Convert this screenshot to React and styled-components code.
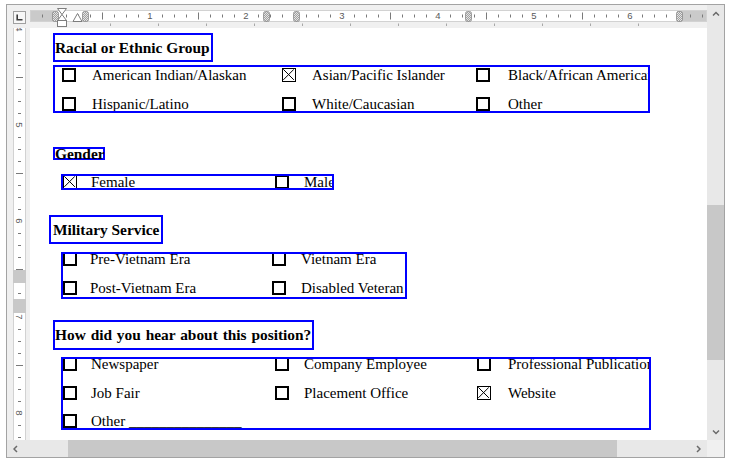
import React from 'react';
import styled, { createGlobalStyle } from 'styled-components';

const GlobalStyle = createGlobalStyle`
  html, body { margin: 0; padding: 0; background: #fff; }
  body { font-family: "Liberation Serif", "Times New Roman", serif; }
`;

const Frame = styled.div`
  box-sizing: border-box;
  margin: 4px 0 0 6px;
  width: 719px;
  height: 454px;
  border: 1px solid #a3a3a3;
  background: #f0f0f0;
  display: grid;
  grid-template-columns: 23px 677px 17px;
  grid-template-rows: 23px 412px 17px;
  grid-template-areas:
    "tab ruler vs"
    "vr doc vs"
    "hs hs corner";
  overflow: hidden;
`;

const TabCell = styled.div`
  grid-area: tab;
  padding: 6px 0 0 6px;
`;

const TabButton = styled.div`
  box-sizing: border-box;
  width: 13px;
  height: 13px;
  border: 1px solid #a0a0a0;
  background: #f7f7f7;
  display: flex;
  align-items: center;
  justify-content: center;
`;

const RulerCell = styled.div`
  grid-area: ruler;
  svg { display: block; }
`;

const VRulerCell = styled.div`
  grid-area: vr;
  padding-left: 6px;
  svg { display: block; }
`;

const Doc = styled.div`
  grid-area: doc;
  background: #fff;
  overflow: hidden;
  display: flex;
  flex-direction: column;
  align-items: flex-start;
  font-family: "Liberation Serif", "Times New Roman", serif;
  color: #000;
`;

const Heading = styled.div`
  box-sizing: content-box;
  margin: ${(p) => p.$mt}px 0 0 ${(p) => p.$ml}px;
  border: 2px solid #0000ff;
  padding: 0 ${(p) => p.$pr}px 0 ${(p) => p.$pl}px;
  height: ${(p) => p.$h}px;
  line-height: ${(p) => p.$h}px;
  width: ${(p) => (p.$w ? `${p.$w}px` : 'auto')};
  font-size: 15.4px;
  font-weight: bold;
  word-spacing: ${(p) => p.$ws || 0}px;
  white-space: nowrap;
`;

const Group = styled.div`
  box-sizing: border-box;
  margin: ${(p) => p.$mt}px 0 0 ${(p) => p.$ml}px;
  width: ${(p) => p.$w}px;
  border: 2px solid #0000ff;
  padding: 0 0 ${(p) => p.$pb}px ${(p) => p.$pl}px;
  overflow: hidden;
`;

const OptionGrid = styled.div`
  display: grid;
  grid-template-columns: ${(p) => p.$cols};
  grid-auto-rows: ${(p) => p.$rh}px;
  row-gap: ${(p) => p.$gap}px;
  align-items: center;
  justify-items: start;
  margin-top: ${(p) => p.$off}px;
`;

const CheckBox = styled.span`
  display: block;
  box-sizing: border-box;
  width: 14px;
  height: 14px;
  background: #fff;
  border: ${(p) => (p.$checked ? '1.4px' : '2px')} solid #000;
  svg { display: block; }
`;

const Label = styled.span`
  display: block;
  min-width: 0;
  font-size: 15px;
  line-height: 14px;
  white-space: nowrap;
`;

const VScroll = styled.div`
  grid-area: vs;
  background: #e8e8e8;
  display: flex;
  flex-direction: column;
`;

const HScroll = styled.div`
  grid-area: hs;
  background: #e8e8e8;
  display: flex;
`;

const Corner = styled.div`
  grid-area: corner;
  background: #f0f0f0;
`;

const ArrowButton = styled.div`
  flex: none;
  width: 17px;
  height: 17px;
  display: flex;
  align-items: center;
  justify-content: center;
  svg { display: block; }
`;

const Track = styled.div`
  flex: 1;
  display: flex;
  flex-direction: ${(p) => (p.$vertical ? 'column' : 'row')};
`;

const Thumb = styled.div`
  flex: none;
  background: #c8c8c8;
  margin-top: ${(p) => p.$mt || 0}px;
  margin-left: ${(p) => p.$ml || 0}px;
  width: ${(p) => p.$w}px;
  height: ${(p) => p.$h}px;
`;

/* ---------- drawings ---------- */

const Chevron = ({ dir }) => {
  const pts = {
    up: '1,4.5 4,1.5 7,4.5',
    down: '1,1.5 4,4.5 7,1.5',
    left: '4,1 1,4 4,7',
    right: '1,1 4,4 1,7',
  }[dir];
  const vertical = dir === 'up' || dir === 'down';
  return (
    <svg width={vertical ? 8 : 5} height={vertical ? 6 : 8}>
      <polyline points={pts} fill="none" stroke="#6a6a6a" strokeWidth="1.5" />
    </svg>
  );
};

const CheckedMark = () => (
  <svg width="11.2" height="11.2" viewBox="0 0 11.2 11.2">
    <line x1="0.3" y1="0.3" x2="10.9" y2="10.9" stroke="#000" strokeWidth="1" />
    <line x1="10.9" y1="0.3" x2="0.3" y2="10.9" stroke="#000" strokeWidth="1" />
  </svg>
);

const HRuler = () => {
  const items = [];
  for (let k = -2; k <= 54; k++) {
    const x = 24 + 12 * k;
    if (x <= 0 || x >= 677) continue;
    const m = ((k % 8) + 8) % 8;
    if (k > 0 && m === 0) {
      items.push(
        <text key={k} x={x} y={14.3} fontSize="9.5" textAnchor="middle" fill="#5a5a5a"
          fontFamily='"Liberation Sans", Arial, sans-serif'>{k / 8}</text>
      );
    } else if (m === 4) {
      items.push(<rect key={k} x={x} y={7.5} width={1} height={7} fill="#7a7a7a" />);
    } else if (k !== 0) {
      items.push(<rect key={k} x={x} y={9.5} width={1} height={3} fill="#7a7a7a" />);
    }
  }
  const tabs = [];
  for (let x = 110; x <= 640; x += 48) {
    tabs.push(<rect key={x} x={x - 30} y={18.5} width={1} height={2.5} fill="#a8a8a8" />);
  }
  const markers = [52, 82, 263, 293, 465, 676].map((px) => (
    <rect key={px} x={px - 30 + 0.5} y={6.5} width={6} height={10} rx={2}
      fill="url(#chk)" stroke="#8c8c8c" strokeWidth="0.8" />
  ));
  return (
    <svg width="677" height="23" viewBox="0 0 677 23">
      <defs>
        <pattern id="chk" width="2" height="2" patternUnits="userSpaceOnUse">
          <rect width="2" height="2" fill="#e4e4e4" />
          <rect width="1" height="1" fill="#a0a0a0" />
          <rect x="1" y="1" width="1" height="1" fill="#a0a0a0" />
        </pattern>
      </defs>
      <rect x="0" y="5" width="24" height="12" fill="#cacaca" />
      <rect x="24" y="5" width="623" height="12" fill="#ffffff" />
      <rect x="647" y="5" width="30" height="12" fill="#cacaca" />
      <rect x="0.5" y="5.5" width="676" height="11" fill="none" stroke="#d2d2d2" />
      {items}
      {tabs}
      {markers}
      <polygon points="27.5,3.5 36.5,3.5 32,9.5" fill="#fff" stroke="#7d7d7d" />
      <polygon points="32,9.5 36.5,15.5 27.5,15.5" fill="#fff" stroke="#7d7d7d" />
      <rect x="27.5" y="15.5" width="9" height="6" fill="#fff" stroke="#7d7d7d" />
      <polygon points="47.5,8.5 52,16.5 43,16.5" fill="#fff" stroke="#7d7d7d" />
    </svg>
  );
};

const VRuler = () => {
  const items = [];
  for (let k = 0; k <= 34; k++) {
    const y = 1 + 12 * k;
    const m = k % 8;
    if (m === 0) {
      items.push(
        <text key={k} x={6.5} y={y} fontSize="9.5" textAnchor="middle" dominantBaseline="central"
          fill="#5a5a5a" fontFamily='"Liberation Sans", Arial, sans-serif'
          transform={`rotate(90 6.5 ${y})`}>{4 + k / 8}</text>
      );
    } else if (m === 4) {
      items.push(<rect key={k} x={3} y={y} width={7} height={1} fill="#7a7a7a" />);
    } else {
      items.push(<rect key={k} x={5} y={y} width={3} height={1} fill="#7a7a7a" />);
    }
  }
  return (
    <svg width="13" height="412" viewBox="0 0 13 412">
      <rect x="0" y="0" width="13" height="412" fill="#fff" />
      <rect x="0.5" y="-1" width="12" height="414" fill="none" stroke="#d2d2d2" />
      {items}
      <rect x="0" y="242" width="13" height="13" fill="#c8c8c8" />
      <rect x="0" y="271" width="13" height="14" fill="#c8c8c8" />
    </svg>
  );
};

/* ---------- data ---------- */

const sections = [
  {
    title: 'Racial or Ethnic Group',
    head: { mt: 5, ml: 23, h: 25, pl: 0, pr: 1 },
    group: { mt: 3, ml: 23, w: 597, pl: 7, pb: 0, off: 1, rh: 14, gap: 15, cols: '30px 190px 30px 164px 32px 1fr' },
    items: [
      ['American Indian/Alaskan', false], ['Asian/Pacific Islander', true], ['Black/African American', false],
      ['Hispanic/Latino', false], ['White/Caucasian', false], ['Other', false],
    ],
  },
  {
    title: 'Gender',
    head: { mt: 34, ml: 23, h: 9, pl: 0, pr: 0, w: 48 },
    group: { mt: 14, ml: 31, w: 273, pl: 0, pb: 0, off: 0, rh: 12, gap: 15, cols: '28px 184px 29px 1fr' },
    items: [['Female', true], ['Male', false]],
  },
  {
    title: 'Military Service',
    head: { mt: 25, ml: 19, h: 25, pl: 2, pr: 0, w: 108 },
    group: { mt: 8, ml: 31, w: 346, pl: 0, pb: 2, off: -2, rh: 14, gap: 15, cols: '27px 182px 29px 1fr' },
    items: [
      ['Pre-Vietnam Era', false], ['Vietnam Era', false],
      ['Post-Vietnam Era', false], ['Disabled Veteran', false],
    ],
  },
  {
    title: 'How did you hear about this position?',
    head: { mt: 21, ml: 23, h: 26, pl: 0, pr: 0, w: 257, ws: 1 },
    group: { mt: 7, ml: 31, w: 590, pl: 0, pb: 0, off: -2, rh: 14, gap: 14.5, cols: '28px 184px 29px 173px 31px 1fr' },
    items: [
      ['Newspaper', false], ['Company Employee', false], ['Professional Publication', false],
      ['Job Fair', false], ['Placement Office', false], ['Website', true],
      ['Other _______________', false],
    ],
  },
];

export default function App() {
  return (
    <>
      <GlobalStyle />
      <Frame>
        <TabCell>
          <TabButton>
            <svg width="7" height="7" viewBox="0 0 7 7">
              <path d="M1.2 0.5 V5.8 H6.5" fill="none" stroke="#3c3c3c" strokeWidth="1.6" />
            </svg>
          </TabButton>
        </TabCell>
        <RulerCell>
          <HRuler />
        </RulerCell>
        <VRulerCell>
          <VRuler />
        </VRulerCell>
        <Doc>
          {sections.map((s) => (
            <React.Fragment key={s.title}>
              <Heading $mt={s.head.mt} $ml={s.head.ml} $h={s.head.h} $pl={s.head.pl} $pr={s.head.pr}
                $w={s.head.w} $ws={s.head.ws}>
                {s.title}
              </Heading>
              <Group $mt={s.group.mt} $ml={s.group.ml} $w={s.group.w} $pl={s.group.pl} $pb={s.group.pb}>
                <OptionGrid $cols={s.group.cols} $rh={s.group.rh} $gap={s.group.gap} $off={s.group.off}>
                  {s.items.map(([label, checked]) => (
                    <React.Fragment key={label}>
                      <CheckBox $checked={checked}>{checked && <CheckedMark />}</CheckBox>
                      <Label>{label}</Label>
                    </React.Fragment>
                  ))}
                </OptionGrid>
              </Group>
            </React.Fragment>
          ))}
        </Doc>
        <VScroll>
          <ArrowButton><Chevron dir="up" /></ArrowButton>
          <Track $vertical>
            <Thumb $mt={183} $w={17} $h={155} />
          </Track>
          <ArrowButton><Chevron dir="down" /></ArrowButton>
        </VScroll>
        <HScroll>
          <ArrowButton><Chevron dir="left" /></ArrowButton>
          <Track>
            <Thumb $ml={44} $w={549} $h={17} />
          </Track>
          <ArrowButton><Chevron dir="right" /></ArrowButton>
        </HScroll>
        <Corner />
      </Frame>
    </>
  );
}
